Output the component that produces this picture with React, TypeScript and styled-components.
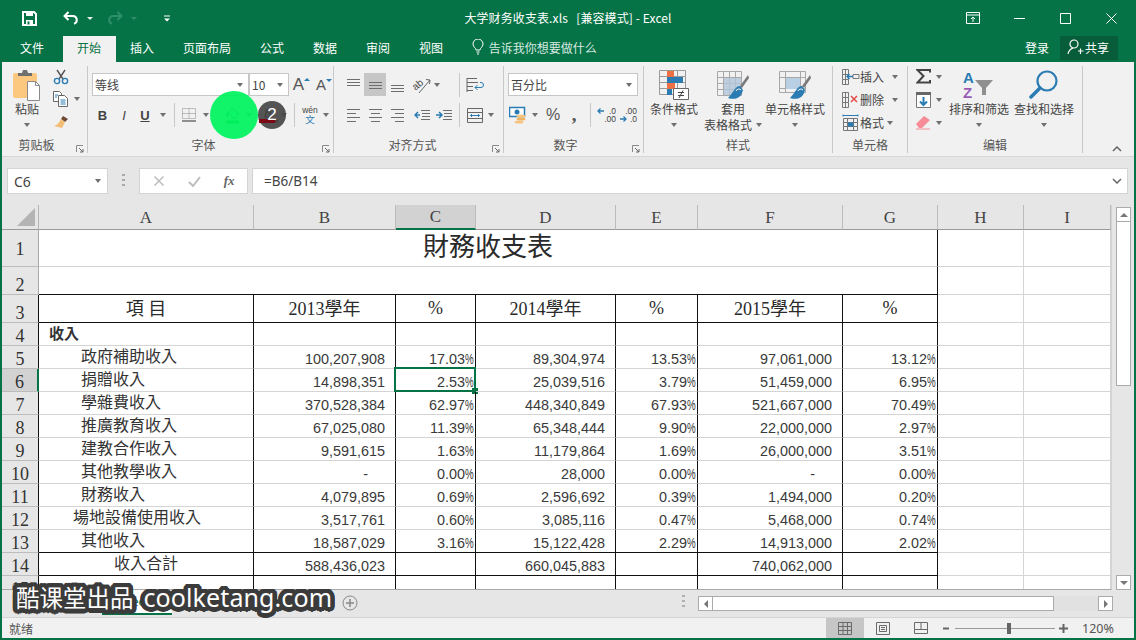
import React from 'react';
import styled, { createGlobalStyle } from 'styled-components';

const UI_FONT = `"Noto Sans CJK SC", "Noto Sans", sans-serif`;
const GREEN = '#067346';

const Global = createGlobalStyle`
  * { box-sizing: border-box; }
  html, body { margin: 0; padding: 0; background: #f1f1f1; overflow: hidden; }
  body { font-family: ${UI_FONT}; }
`;

const Window = styled.div`
  position: relative; width: 1136px; height: 640px; overflow: hidden;
  display: flex; flex-direction: column; background: #f1f1f1;
  border-left: 2px solid ${GREEN}; border-right: 2px solid ${GREEN}; border-bottom: 2px solid ${GREEN};
  color: #444; font-size: 12px;
`;

/* ---------- title bar ---------- */
const TitleBar = styled.div`
  height: 36px; background: ${GREEN}; color: #fff; flex: none;
  display: grid; grid-template-columns: 1fr auto 1fr; align-items: center;
`;
const Qat = styled.div`display: flex; align-items: center; padding-left: 20px;`;
const QatSlot = styled.div<{ $w: number }>`
  width: ${p => p.$w}px; display: flex; align-items: center; justify-content: center;
`;
const DocTitle = styled.div`font-size: 12px; white-space: pre; padding: 0 0 2px 0; letter-spacing: 0.1px;`;
const WinControls = styled.div`display: flex; justify-content: flex-end;`;
const WinBtn = styled.div`
  width: 46px; height: 36px; display: flex; align-items: center; justify-content: center;
`;
const QatCaret = styled.span<{ $dim?: boolean }>`
  width: 0; height: 0; border-left: 3px solid transparent; border-right: 3px solid transparent;
  border-top: 3px solid ${p => (p.$dim ? '#2f8f68' : '#e6f1ec')};
`;

/* ---------- tabs ---------- */
const TabBar = styled.div`
  height: 26px; background: ${GREEN}; flex: none; display: flex; align-items: stretch;
  padding-left: 3.5px; color: #fff;
`;
const Tab = styled.div<{ $active?: boolean; $gap?: number }>`
  padding: 0 14.5px 4px; display: flex; align-items: center; font-size: 12px;
  margin-right: ${p => p.$gap ?? 0}px;
  background: ${p => (p.$active ? '#f1f1f1' : 'transparent')};
  color: ${p => (p.$active ? GREEN : '#fff')};
`;
const TellMe = styled.div`
  display: flex; align-items: center; gap: 5px; margin-left: 14px; padding-bottom: 4px; color: #d7e9e1; font-size: 12px;
`;
const Account = styled.div`
  margin-left: auto; display: flex; align-items: stretch; padding-right: 16px; padding-bottom: 2px;
`;
const SignIn = styled.div`display: flex; align-items: center; margin-right: 11px; padding-bottom: 2px;`;
const Share = styled.div`
  width: 58px; background: #075c39; display: flex; align-items: center; gap: 1px; padding: 0 0 2px 7px;
`;

/* ---------- ribbon ---------- */
const Ribbon = styled.div`
  height: 95px; flex: none; display: flex; padding-top: 4px; background: #f1f1f1;
  border-bottom: 1px solid #d6d6d6;
`;
const Group = styled.div<{ $w: number }>`
  position: relative; width: ${p => p.$w}px; height: 87px; flex: none;
  display: flex; flex-direction: column; border-right: 1px solid #c8c8c8;
`;
const GroupBody = styled.div<{ $pl?: number }>`
  height: 70px; flex: none; padding-left: ${p => p.$pl ?? 0}px; display: flex;
`;
const GroupLabel = styled.div<{ $pr?: number }>`
  height: 17px; line-height: 18px; text-align: center; font-size: 12px; color: #555;
  padding-right: ${p => p.$pr ?? 0}px;
`;
const Launcher = styled.svg`position: absolute; right: 3px; bottom: 0;`;
const Stack = styled.div<{ $mt?: number }>`display: flex; flex-direction: column; margin-top: ${p => p.$mt ?? 0}px;`;
const Row = styled.div<{ $mt?: number; $h?: number }>`
  display: flex; align-items: center; margin-top: ${p => p.$mt ?? 0}px; height: ${p => p.$h ?? 23}px;
`;
const Slot = styled.div<{ $w: number; $ml?: number; $on?: boolean }>`
  width: ${p => p.$w}px; margin-left: ${p => p.$ml ?? 0}px; height: 100%; flex: none;
  display: flex; align-items: center; justify-content: center;
  background: ${p => (p.$on ? '#c6c6c6' : 'transparent')};
`;
const Caret = styled.span`
  width: 0; height: 0; display: inline-block; border-left: 3px solid transparent;
  border-right: 3px solid transparent; border-top: 4px solid #707070;
`;
const VSep = styled.span`width: 1px; height: 24px; background: #c8c8c8;`;
const Select = styled.div<{ $w: number }>`
  width: ${p => p.$w}px; height: 23px; flex: none;
  background: #fff; border: 1px solid #c6c6c6; display: flex; align-items: center;
  justify-content: space-between; padding: 0 5px 0 2px; font-size: 12px; color: #444;
`;
const PasteCol = styled.div`
  width: 40px; margin-left: 5px; display: flex; flex-direction: column; align-items: center; padding-top: 3px;
`;
const ClipCol = styled.div`width: 36px; padding-left: 2px; display: flex; flex-direction: column;`;
const BigBtn = styled.div<{ $w: number; $ml?: number }>`
  width: ${p => p.$w}px; margin-left: ${p => p.$ml ?? 0}px; flex: none;
  display: flex; flex-direction: column; align-items: center; padding-top: 3px;
`;
const BigIcon = styled.div`height: 32px; display: flex; align-items: center; justify-content: center;`;
const BigText = styled.div`
  height: 16px; line-height: 16px; font-size: 12px; white-space: nowrap; color: #444;
  display: flex; align-items: center; gap: 4px;
`;
const CellText = styled.span<{ $w: number }>`width: ${p => p.$w}px; flex: none; font-size: 12px;`;
const RibbonRest = styled.div`
  flex: 1; display: flex; align-items: flex-end; justify-content: flex-end; padding: 0 12px 4px 0;
`;
const StyleGlyph = styled.span<{ $i?: boolean; $u?: boolean }>`
  font-family: "Liberation Sans", sans-serif; font-size: 13px; color: #444; font-weight: ${p => (p.$i ? 400 : 700)};
  font-style: ${p => (p.$i ? 'italic' : 'normal')}; text-decoration: ${p => (p.$u ? 'underline' : 'none')};
`;
const GrowA = styled.span<{ $small?: boolean }>`
  position: relative; font-family: "Liberation Sans", sans-serif; color: #555; font-size: ${p => (p.$small ? 15 : 17)}px;
  margin-left: -4px;
`;
const GrowMark = styled.span<{ $down?: boolean }>`
  position: absolute; right: -6px; top: 3px; width: 0; height: 0;
  border-left: 3px solid transparent; border-right: 3px solid transparent;
  ${p => (p.$down ? `border-top: 3px solid #2b7cb3;` : `border-bottom: 3px solid #2b7cb3;`)}
`;
const PercentGlyph = styled.span`
  font-family: "Liberation Sans", sans-serif; color: #555; font-size: 16px;
`;
const CommaGlyph = styled.span`
  font-family: "Liberation Serif", serif; color: #555; font-size: 19px; font-weight: 700; line-height: 14px;
`;

/* ---------- formula bar ---------- */
const FormulaRow = styled.div`
  height: 48px; flex: none; background: #e6e6e6; display: flex; padding: 11px 6px 11px 5px;
`;
const NameBox = styled.div`
  width: 101px; height: 26px; background: #fff; border: 1px solid #d4d4d4; display: flex; align-items: center;
  justify-content: space-between; padding: 0 6px; font-size: 14px; color: #444; font-family: "Noto Sans", sans-serif;
`;
const Dots = styled.div`width: 31px; display: flex; align-items: center; justify-content: center;`;
const FxBox = styled.div`
  width: 109px; height: 26px; background: #fff; border: 1px solid #d4d4d4; margin-right: 4px;
  display: flex; align-items: center;
`;
const FxSlot = styled.div<{ $w: number }>`
  width: ${p => p.$w}px; display: flex; justify-content: center; align-items: center;
`;
const FxText = styled.span`
  font-family: "Liberation Serif", serif; font-style: italic; font-weight: 700; font-size: 13px; color: #666;
`;
const FormulaInput = styled.div`
  flex: 1; height: 26px; background: #fff; border: 1px solid #d4d4d4; display: flex; align-items: center;
  justify-content: space-between; padding: 0 5px 0 11px; font-size: 13.5px; color: #444; font-family: "Noto Sans", sans-serif;
`;

/* ---------- sheet ---------- */
const SheetArea = styled.div`
  height: 385px; flex: none; display: flex; background: #e6e6e6; overflow: hidden;
`;
const GridWrap = styled.div`
  width: 1110px; height: 385px; overflow: hidden; flex: none; border-bottom: 1px solid #a8a8a8;
  background: #fff; border-right: 1px solid #d4d4d4;
`;
const Grid = styled.div`
  display: grid;
  grid-template-columns: 37px 215px 142px 80px 140px 82px 145px 95px 86px 87px;
  grid-template-rows: 25px 37px 28px 28px repeat(12, 23px);
`;
const Corner = styled.div`
  background: #e6e6e6; border-right: 1px solid #b5b5b5; border-bottom: 1px solid #9a9a9a;
  display: flex; align-items: center; justify-content: flex-end; padding: 0 3px 0 0;
`;
const ColHead = styled.div<{ $on?: boolean }>`
  background: ${p => (p.$on ? '#d2d2d2' : '#e6e6e6')};
  border-right: 1px solid #bcbcbc;
  border-bottom: ${p => (p.$on ? `2px solid ${GREEN}` : '1px solid #9a9a9a')};
  display: flex; align-items: center; justify-content: center; padding-top: 1px;
  font-family: "Liberation Serif", serif; font-size: 17px; color: #444;
`;
const RowHead = styled.div<{ $on?: boolean; $dark?: boolean; $lift?: number }>`
  background: ${p => (p.$on ? '#d2d2d2' : '#e6e6e6')};
  border-right: ${p => (p.$on ? `2px solid ${GREEN}` : p.$dark ? '1px solid #111' : '1px solid #a8a8a8')};
  border-bottom: 1px solid #bcbcbc;
  display: flex; align-items: flex-end; justify-content: center; line-height: 18px;
  padding-bottom: ${p => p.$lift ?? 0}px;
  font-family: "Liberation Serif", serif; font-size: 18px; color: #333;
`;
const Cell = styled.div<{ $right?: boolean; $bottom?: boolean; $span?: number }>`
  position: relative; min-width: 0; white-space: nowrap;
  grid-column: span ${p => p.$span ?? 1};
  border-right: 1px solid ${p => (p.$right ? '#111' : '#d4d4d4')};
  border-bottom: 1px solid ${p => (p.$bottom ? '#111' : '#d4d4d4')};
`;
const TitleCell = styled(Cell)`
  display: flex; align-items: center; justify-content: center; padding-bottom: 8px;
  font-family: "Liberation Serif", "Noto Sans CJK TC", serif; font-size: 26px; color: #2a2a2a;
`;
const HeadCell = styled(Cell)<{ $low?: boolean }>`
  display: flex; align-items: center; justify-content: center; padding-bottom: ${p => (p.$low ? 0 : 3)}px;
  font-family: "Liberation Serif", "Noto Sans CJK TC", serif; font-size: 18px; color: #2a2a2a;
`;
const LabelCell = styled(Cell)<{ $indent: number; $strong?: boolean }>`
  padding-left: ${p => p.$indent}px; display: flex; align-items: center; padding-bottom: 4px;
  font-family: "Noto Sans CJK TC", serif; font-size: ${p => (p.$strong ? 15 : 16)}px; color: #333;
  font-weight: ${p => (p.$strong ? 700 : 400)};
`;
const NumCell = styled(Cell)<{ $pad: number }>`
  padding-right: ${p => p.$pad}px; display: flex; align-items: flex-end; justify-content: flex-end;
  font-family: "Liberation Sans", sans-serif; font-size: 14.4px; line-height: 18px; color: #3a3a3a;
`;
const PctSign = styled.span`
  display: inline-block; width: 9px; transform: scaleX(0.68); transform-origin: left center;
`;
const Selection = styled.div`
  position: absolute; left: -2px; top: -2px; right: -1px; bottom: -1px; border: 2px solid ${GREEN}; pointer-events: none;
  &::after {
    content: ''; position: absolute; right: -4px; bottom: -4px; width: 6px; height: 6px;
    background: ${GREEN};
  }
`;
const VScroll = styled.div`
  width: 15px; margin-left: 4px; padding-top: 2px; display: flex; flex-direction: column; height: 385px;
`;
const ArrowBox = styled.div`
  width: 15px; height: 15px; flex: none; background: #fff; border: 1px solid #ababab;
  display: flex; align-items: center; justify-content: center;
`;
const VThumb = styled.div`height: 164px; flex: none; background: #fff; border: 1px solid #ababab; border-top: 0;`;
const VTrack = styled.div`flex: 1;`;

/* ---------- sheet tabs ---------- */
const SheetTabs = styled.div`
  height: 27px; flex: none; background: #e6e6e6; display: flex; align-items: flex-start; padding-left: 100px;
`;
const SheetTab = styled.div<{ $active?: boolean }>`
  width: 70px; height: 25px; display: flex; align-items: center; justify-content: center;
  font-family: "Noto Sans", sans-serif; font-size: 12px; color: ${p => (p.$active ? GREEN : '#444')};
  background: ${p => (p.$active ? '#fff' : 'transparent')};
  border-bottom: ${p => (p.$active ? `2px solid ${GREEN}` : '0')};
`;
const AddSheet = styled.div`margin-left: 30px; margin-top: 5px; display: flex;`;
const Splitter = styled.div`margin-left: 324px; margin-top: 5px; width: 10px; display: flex;`;
const HScroll = styled.div`
  margin-left: 6px; margin-top: 6px; width: 415px; height: 15px; display: flex; background: #e1e1e1;
`;
const HThumb = styled.div`width: 341px; background: #fff; border: 1px solid #ababab; border-left: 0;`;
const HTrack = styled.div`flex: 1;`;

/* ---------- status bar ---------- */
const StatusBar = styled.div`
  height: 21px; flex: none; background: #f1f1f1; display: flex; align-items: stretch; padding: 0 19px 0 7px;
  border-top: 1px solid #d4d4d4; font-size: 12px; color: #555;
`;
const StatusText = styled.div`display: flex; align-items: center;`;
const ViewBtns = styled.div`margin-left: auto; display: flex; align-items: stretch;`;
const ViewBtn = styled.div<{ $on?: boolean }>`
  width: 38px; display: flex; align-items: center; justify-content: center;
  background: ${p => (p.$on ? '#c6c6c6' : 'transparent')};
`;
const Zoomer = styled.div`display: flex; align-items: center; margin-left: 2px;`;
const ZoomTrack = styled.div`
  position: relative; width: 100px; height: 1px; background: #999; margin: 0 4px;
`;
const ZoomThumb = styled.span`
  position: absolute; left: 52px; top: -5px; width: 4px; height: 11px; background: #666;
`;
const ZoomPct = styled.div`width: 33px; margin-left: 14px; font-family: "Noto Sans", sans-serif; font-size: 12.5px; white-space: nowrap;`;

/* ---------- overlays ---------- */
const GreenSpot = styled.div`
  position: absolute; left: 208px; top: 91px; width: 48px; height: 48px; border-radius: 50%;
  background: rgba(0, 244, 96, 0.93);
`;
const DarkSpot = styled.div`
  position: absolute; left: 256px; top: 101px; width: 28px; height: 28px; border-radius: 50%;
  background: rgba(70, 70, 70, 0.92); color: #fff; display: flex; align-items: center; justify-content: center;
  font-family: "Liberation Sans", sans-serif; font-size: 17px;
`;
const DarkSpotBar = styled.span`
  position: absolute; left: 1px; top: 18px; width: 16px; height: 4px; background: #7b0a14;
`;
const DarkSpotDigit = styled.span`position: relative;`;
const ringShadow = (() => {
  const parts: string[] = [];
  for (let i = 0; i < 32; i++) {
    const a = (i / 32) * Math.PI * 2;
    parts.push(`${(Math.cos(a) * 4.5).toFixed(1)}px ${(Math.sin(a) * 4.5).toFixed(1)}px 0 #3b3b3b`);
    parts.push(`${(Math.cos(a) * 2.5).toFixed(1)}px ${(Math.sin(a) * 2.5).toFixed(1)}px 0 #3b3b3b`);
  }
  return parts.join(',');
})();
const Watermark = styled.div`
  position: absolute; left: 14px; top: 580px; display: flex; gap: 10px; color: #fff; white-space: nowrap;
  font-family: "Noto Sans CJK SC", "Noto Sans", sans-serif; font-size: 23.5px; line-height: 34px;
  text-shadow: ${ringShadow};
`;
const WmLatin = styled.span`font-family: "Noto Sans", sans-serif; font-size: 25px; letter-spacing: 0.1px;`;

/* ---------- icons ---------- */
const Svg: React.FC<{ w: number; h: number; children: React.ReactNode }> = ({ w, h, children }) => (
  <svg width={w} height={h} viewBox={`0 0 ${w} ${h}`} fill="none">{children}</svg>
);
const BLUE = '#2b7cb3';

const SaveIcon = () => (
  <Svg w={15} h={15}>
    <path d="M1 1h11l2 2v11H1z" stroke="#fff" strokeWidth="2" />
    <path d="M4 1h7v4H4zM4 9h7v5H4z" fill="#fff" />
    <path d="M5.500 10.500h2v3h-2z" fill={GREEN} />
  </Svg>
);
const UndoIcon = ({ color = '#fff', flip = false }: { color?: string; flip?: boolean }) => (
  <Svg w={16} h={14}>
    <g transform={flip ? 'translate(16 0) scale(-1 1)' : undefined} stroke={color} strokeWidth="2">
      <path d="M5.500 1 1.500 5l4 4" />
      <path d="M2 5h8a4 4 0 0 1 1 7.800" />
    </g>
  </Svg>
);
const QatMore = () => (
  <Svg w={8} h={7}>
    <path d="M1 1h6" stroke="#fff" />
    <path d="M1 3.500h6L4 6.500z" fill="#fff" />
  </Svg>
);
const RibbonOpt = () => (
  <Svg w={14} h={12}>
    <path d="M.5.5h13v11H.5zM.5 3h13" stroke="#fff" />
    <path d="M7 10V5M5 7l2-2 2 2" stroke="#fff" />
  </Svg>
);
const MinIcon = () => <Svg w={11} h={11}><path d="M0 5.500h11" stroke="#fff" /></Svg>;
const MaxIcon = () => <Svg w={11} h={11}><path d="M.5.5h10v10H.5z" stroke="#fff" /></Svg>;
const CloseIcon = () => <Svg w={11} h={11}><path d="M.5.5l10 10M10.500.5l-10 10" stroke="#fff" /></Svg>;
const BulbIcon = () => (
  <Svg w={12} h={16}>
    <path d="M4 11c0-2-3-3-3-6a5 5 0 0 1 10 0c0 3-3 4-3 6z" stroke="#fff" />
    <path d="M4.500 13h3M5 15h2" stroke="#fff" />
  </Svg>
);
const UserIcon = () => (
  <Svg w={17} h={16}>
    <circle cx="7" cy="5" r="4" stroke="#fff" strokeWidth="1.200" />
    <path d="M1 15c.5-3 2.500-5 5-6M11 12h5.500M13.500 9.500v5.500" stroke="#fff" strokeWidth="1.200" />
  </Svg>
);
const PasteIcon = () => (
  <Svg w={30} h={32}>
    <rect x="1" y="4" width="24" height="25" rx="2" fill="#fcc77e" />
    <path d="M6 4h4l1-3h4l1 3h4v3H6z" fill="#6f6f6f" />
    <path d="M15.500 12.500h8l4 4v15h-12z" fill="#fff" stroke="#8a8a8a" />
    <path d="M23.500 12.500v4h4" stroke="#8a8a8a" />
  </Svg>
);
const ScissorsIcon = () => (
  <Svg w={16} h={16}>
    <path d="M4 1l6 9M12 1l-6 9" stroke="#555" strokeWidth="1.400" />
    <circle cx="4" cy="12" r="2.600" stroke={BLUE} strokeWidth="1.400" />
    <circle cx="12" cy="12" r="2.600" stroke={BLUE} strokeWidth="1.400" />
  </Svg>
);
const CopyIcon = () => (
  <Svg w={16} h={16}>
    <path d="M.5.5h6l2 2v8H.5z" fill="#fff" stroke="#666" />
    <path d="M5.500 4.500h6l3 3v8h-9z" fill="#fff" stroke="#666" />
    <path d="M7.500 9h5M7.500 11h5M7.500 13h5M2 4h3M2 6h2" stroke={BLUE} />
  </Svg>
);
const BrushIcon = () => (
  <Svg w={16} h={14}>
    <path d="M10 1l5 3-3 3-4-3z" fill="#6b4a38" />
    <path d="M8 4l4 3-3 6-8-2c3-1 5-3 7-7z" fill="#f4bd76" />
  </Svg>
);
const Launch = () => (
  <Launcher width="8" height="8" viewBox="0 0 8 8" fill="none">
    <path d="M.5 7V.5H7" stroke="#8a8a8a" />
    <path d="M3 3l4 4M7 4v3H4" stroke="#666" />
  </Launcher>
);
const BordersIcon = () => (
  <Svg w={14} h={14}>
    <path d="M.5.5h13v10H.5zM.5 5.500h13M7 .5v10" stroke="#8a8a8a" strokeDasharray="1 1" />
    <path d="M0 13h14" stroke="#666" strokeWidth="1.400" />
  </Svg>
);
const BucketIcon = () => (
  <Svg w={18} h={18}>
    <path d="M8 2l7 6-5 5-6-6z" fill="#bfe9cf" stroke="#1d5a36" />
    <path d="M4 7 3 11" stroke="#1d5a36" strokeWidth="1.500" />
    <path d="M2 16h13" stroke="#00a020" strokeWidth="3" />
  </Svg>
);
const FontColorIcon = () => (
  <Svg w={18} h={18}>
    <text x="3" y="12" fontFamily="Liberation Sans" fontSize="12" fontWeight="700" fontStyle="italic" fill="#222">b</text>
    <path d="M0 15h17" stroke="#a00000" strokeWidth="3" />
  </Svg>
);
const WenIcon = () => (
  <Svg w={20} h={20}>
    <text x="10" y="8" textAnchor="middle" fontFamily="Liberation Sans" fontSize="8.500" fill="#444">wén</text>
    <text x="10" y="18" textAnchor="middle" fontFamily="Noto Sans CJK SC" fontSize="9.500" fill={BLUE}>文</text>
  </Svg>
);
const Lines = ({ kind }: { kind: 'top' | 'mid' | 'bot' | 'left' | 'center' | 'right' }) => {
  const y = kind === 'top' ? [2, 5, 8] : kind === 'mid' ? [5, 8, 11] : kind === 'bot' ? [8, 11, 14] : [2, 6, 10, 14];
  return (
    <Svg w={15} h={16}>
      {y.map((v, i) => {
        const short = i % 2 === 1 && y.length === 4;
        const [a, b] = !short ? [1, 14] : kind === 'left' ? [1, 10] : kind === 'right' ? [5, 14] : [3, 12];
        return <path key={v} d={`M${a} ${v + 0.5}H${b}`} stroke="#6e6e6e" />;
      })}
    </Svg>
  );
};
const OrientIcon = () => (
  <Svg w={20} h={18}>
    <text x="1" y="12" transform="rotate(-40 6 10)" fontFamily="Liberation Sans" fontSize="10" fill="#444">ab</text>
    <path d="M7 17 18 4M14 3.500l4 .5-.5 4" stroke="#666" />
  </Svg>
);
const WrapIcon = () => (
  <Svg w={18} h={16}>
    <path d="M1 1.500h10M1 5.500h11M1 9.500h6M1 13.500h6" stroke="#666" />
    <path d="M1 1v14" stroke="#666" />
    <path d="M9 10.500h6a2.500 2.500 0 0 0 0-5h-1M11.500 8l-2.500 2.500 2.500 2.500" stroke={BLUE} />
  </Svg>
);
const IndentIcon = ({ inc }: { inc?: boolean }) => (
  <Svg w={16} h={12}>
    <path d="M7 1.500h9M8 4.500h8M8 7.500h8M7 10.500h9" stroke="#6e6e6e" />
    <path d={inc ? 'M0 6h5M3 3l3 3-3 3' : 'M1 6h5M4 3 1 6l3 3'} stroke={BLUE} strokeWidth="1.500" />
  </Svg>
);
const MergeIcon = () => (
  <Svg w={16} h={15}>
    <path d="M.5.5h15v14H.5zM.5 4.500h15M.5 10.500h15" stroke="#666" />
    <path d="M3.500 7.500h9M5 6 3.500 7.500 5 9M11 6l1.500 1.500L11 9" stroke={BLUE} />
  </Svg>
);
const CurrencyIcon = () => (
  <Svg w={18} h={18}>
    <path d="M.5 1.500h15v9H.5z" fill="#fff" stroke={BLUE} strokeWidth="1.500" />
    <circle cx="8" cy="6" r="2.500" fill={BLUE} />
    <ellipse cx="12" cy="10" rx="4.500" ry="1.600" fill="#f6c37e" />
    <ellipse cx="12" cy="13" rx="4.500" ry="1.600" fill="#f3b461" />
    <ellipse cx="10" cy="16" rx="4.500" ry="1.600" fill="#f6c37e" />
  </Svg>
);
const DecIcon = ({ inc }: { inc?: boolean }) => (
  <Svg w={20} h={16}>
    <text x="20" y="7" textAnchor="end" fontFamily="Liberation Sans" fontSize="8.500" fill="#444">{inc ? '.0' : '.00'}</text>
    <text x="20" y="15" textAnchor="end" fontFamily="Liberation Sans" fontSize="8.500" fill="#444">{inc ? '.00' : '.0'}</text>
    {inc ? <path d="M8 4H2M4.500 1.500 2 4l2.500 2.500" stroke={BLUE} strokeWidth="1.300" /> : <path d="M3 12h6M6.500 9.500 9 12l-2.500 2.500" stroke={BLUE} strokeWidth="1.300" />}
  </Svg>
);
const CondIcon = () => (
  <Svg w={30} h={32}>
    <path d="M.5 1.500h26v24H.5zM.5 7.500h26M.5 13.500h26M.5 19.500h26M8.500 1.500v24M18.500 1.500v24" stroke="#9a9a9a" />
    <path d="M8 2h7v6H8zM8 14h8v6H8z" fill="#ef6f45" />
    <path d="M8 8h16v6H8zM8 20h5v6H8z" fill={BLUE} />
    <path d="M14.500 19.500h15v11h-15z" fill="#fff" stroke="#666" />
    <path d="M19 23.500h6M19 26.500h6M24 21.500l-4 7.500" stroke="#444" />
  </Svg>
);
const TableFmtIcon = () => (
  <Svg w={32} h={32}>
    <path d="M.5 2.500h24v24H.5zM.5 8.500h24M.5 14.500h24M.5 20.500h24M6.500 2.500v24M12.500 2.500v24M18.500 2.500v24" stroke="#a8a8a8" />
    <path d="M7 9h17v17H7z" fill="#b3c5d9" opacity=".8" />
    <path d="M31 6 23 17l2 2 7-10z" fill="#7a7a7a" />
    <path d="M23 17c-5 0-6 6-12 12 6 2 13 1 15-8z" fill={BLUE} />
    <path d="M19 22a3 3 0 0 1 5-1" stroke="#fff" />
  </Svg>
);
const CellStyleIcon = () => (
  <Svg w={32} h={32}>
    <path d="M.5 2.500h26v21H.5zM.5 8.500h26M.5 19.500h26M6.500 2.500v21M21.500 2.500v21" stroke="#a8a8a8" />
    <path d="M7 9h14v11H7z" fill="#b8cfe4" />
    <path d="M31 6 23 17l2 2 7-10z" fill="#7a7a7a" />
    <path d="M23 17c-5 0-6 6-12 12 6 2 13 1 15-8z" fill={BLUE} />
    <path d="M19 22a3 3 0 0 1 5-1" stroke="#fff" />
  </Svg>
);
const InsertIcon = () => (
  <Svg w={19} h={16}>
    <path d="M1.500.5h6v5h-6zM1.500 5.500v5h6v-5M1.500 10.500v5h6v-5M4.500.5v15" stroke="#777" />
    <path d="M12 5.500h6v4h-6z" stroke="#777" />
    <path d="M6 7.500h6M8.500 5 6 7.500 8.500 10" stroke={BLUE} strokeWidth="1.400" />
  </Svg>
);
const DeleteIcon = () => (
  <Svg w={19} h={16}>
    <path d="M1.500.5h6v5h-6zM1.500 5.500v5h6v-5M1.500 10.500v5h6v-5M4.500.5v15" stroke="#777" />
    <path d="M10 4l6 6M16 4l-6 6" stroke="#e2504c" strokeWidth="1.600" />
  </Svg>
);
const FormatIcon = () => (
  <Svg w={17} h={17}>
    <path d="M1.500 4.500h14v12h-14zM1.500 8.500h14M1.500 12.500h14M5.500 4.500v12M11.500 4.500v12" stroke="#777" />
    <path d="M6 8.500h5.500v4H6z" fill={BLUE} />
    <path d="M1 1.500h15M1 .5v2M16 .5v2" stroke={BLUE} />
  </Svg>
);
const SigmaIcon = () => (
  <Svg w={15} h={15}>
    <path d="M14 3.500V1H1.500l6 6-6 6.500H14V11" stroke="#444" strokeWidth="2" />
  </Svg>
);
const FillDownIcon = () => (
  <Svg w={15} h={16}>
    <path d="M.5 2.500h14v13H.5z" fill="#fff" stroke="#777" />
    <path d="M0 0h15v3H0z" fill="#666" />
    <path d="M7.500 5v8M4 9.500l3.500 3.500L11 9.500" stroke={BLUE} strokeWidth="2" />
  </Svg>
);
const EraserIcon = () => (
  <Svg w={16} h={15}>
    <path d="M1 9l8-8 6 4-8 8H4z" fill="#f58c98" />
    <path d="M1 14h14" stroke="#f58c98" />
  </Svg>
);
const SortIcon = () => (
  <Svg w={32} h={32}>
    <text x="0" y="14" fontFamily="Liberation Sans" fontWeight="700" fontSize="15" fill={BLUE}>A</text>
    <text x="0" y="29" fontFamily="Liberation Sans" fontWeight="700" fontSize="15" fill="#9a5bb5">Z</text>
    <path d="M12 11h18l-7 8v7h-4v-7z" fill="#8f8f8f" />
  </Svg>
);
const SearchIcon = () => (
  <Svg w={30} h={30}>
    <circle cx="18" cy="11" r="9.500" stroke={BLUE} strokeWidth="2.200" />
    <path d="M11 18 2 27" stroke={BLUE} strokeWidth="3.500" strokeLinecap="round" />
  </Svg>
);
const CollapseIcon = () => <Svg w={10} h={6}><path d="M1 5l4-4 4 4" stroke="#666" strokeWidth="1.500" /></Svg>;
const ChevronDown = () => <Svg w={10} h={6}><path d="M1 1l4 4 4-4" stroke="#666" strokeWidth="1.500" /></Svg>;
const DotsIcon = () => (
  <Svg w={3} h={14}><path d="M0 1h3M0 6h3M0 11h3" stroke="#aaa" strokeWidth="2" /></Svg>
);
const CrossIcon = () => <Svg w={12} h={12}><path d="M1.500 1.500l9 9M10.500 1.500l-9 9" stroke="#bdbdbd" strokeWidth="1.500" /></Svg>;
const CheckIcon = () => <Svg w={13} h={11}><path d="M1 6l4 4 7-9" stroke="#bdbdbd" strokeWidth="2" /></Svg>;
const CornerTri = () => <Svg w={18} h={18}><path d="M18 0v18H0z" fill="#b4b4b4" /></Svg>;
const Tri = ({ dir }: { dir: 'up' | 'down' | 'left' | 'right' }) => {
  const d = { up: 'M4 0l4 4H0z', down: 'M0 0h8L4 4z', left: 'M0 4l4-4v8z', right: 'M0 0l4 4-4 4z' }[dir];
  const vertical = dir === 'up' || dir === 'down';
  return <svg width={vertical ? 8 : 4} height={vertical ? 4 : 8} viewBox={vertical ? '0 0 8 4' : '0 0 4 8'}><path d={d} fill="#777" /></svg>;
};
const PlusCircle = () => (
  <Svg w={16} h={16}>
    <circle cx="8" cy="8" r="7" stroke="#888" />
    <path d="M4 8h8M8 4v8" stroke="#888" strokeWidth="1.500" />
  </Svg>
);
const GripIcon = () => <Svg w={3} h={12}><path d="M0 1h3M0 6h3M0 11h3" stroke="#b0b0b0" strokeWidth="2" /></Svg>;
const ViewNormal = () => (
  <Svg w={14} h={13}>
    <path d="M.5.5h13v12H.5zM.5 4.500h13M.5 8.500h13M5 .5v12M9.500 .5v12" stroke="#6a6a6a" />
  </Svg>
);
const ViewPage = () => (
  <Svg w={14} h={13}>
    <path d="M.5.5h13v12H.5z" stroke="#6a6a6a" />
    <path d="M3.500 3.500h7v6h-7zM5 5.500h4M5 7.500h4" stroke="#6a6a6a" />
  </Svg>
);
const ViewBreak = () => (
  <Svg w={14} h={13}>
    <path d="M.5 7.500V.5h13v11H.5zM.5 7.500h13M7 .5v7" stroke="#6a6a6a" />
  </Svg>
);
const MinusMark = () => <Svg w={9} h={3}><path d="M1 1.500h6" stroke="#666" strokeWidth="2" /></Svg>;
const PlusMark = () => <Svg w={9} h={9}><path d="M0 4.500h9M4.500 0v9" stroke="#666" strokeWidth="2" /></Svg>;

/* ---------- data ---------- */
const COLS = ['A', 'B', 'C', 'D', 'E', 'F', 'G', 'H', 'I'];
const PADS = [0, 10, 1, 10, 1, 10, 1];
type Line = { label: string; indent: number; v: string[] };
const LINES: Line[] = [
  { label: '政府補助收入', indent: 42, v: ['100,207,908', '17.03%', '89,304,974', '13.53%', '97,061,000', '13.12%'] },
  { label: '捐贈收入', indent: 42, v: ['14,898,351', '2.53%', '25,039,516', '3.79%', '51,459,000', '6.95%'] },
  { label: '學雜費收入', indent: 42, v: ['370,528,384', '62.97%', '448,340,849', '67.93%', '521,667,000', '70.49%'] },
  { label: '推廣教育收入', indent: 42, v: ['67,025,080', '11.39%', '65,348,444', '9.90%', '22,000,000', '2.97%'] },
  { label: '建教合作收入', indent: 42, v: ['9,591,615', '1.63%', '11,179,864', '1.69%', '26,000,000', '3.51%'] },
  { label: '其他教學收入', indent: 42, v: ['-', '0.00%', '28,000', '0.00%', '-', '0.00%'] },
  { label: '財務收入', indent: 42, v: ['4,079,895', '0.69%', '2,596,692', '0.39%', '1,494,000', '0.20%'] },
  { label: '場地設備使用收入', indent: 34, v: ['3,517,761', '0.60%', '3,085,116', '0.47%', '5,468,000', '0.74%'] },
  { label: '其他收入', indent: 42, v: ['18,587,029', '3.16%', '15,122,428', '2.29%', '14,913,000', '2.02%'] },
];
const HEADS = ['項 目', '2013學年', '%', '2014學年', '%', '2015學年', '%'];

const Num = ({ text }: { text: string }) =>
  text.endsWith('%') ? <>{text.slice(0, -1)}<PctSign>%</PctSign></> : <>{text}</>;

const Spares = () => <><Cell /><Cell /></>;

export default function App() {
  return (
    <Window>
      <Global />
      <TitleBar>
        <Qat>
          <SaveIcon />
          <QatSlot $w={26} />
          <UndoIcon />
          <QatSlot $w={22}><QatCaret /></QatSlot>
          <QatSlot $w={6} />
          <UndoIcon color="#2f8f68" flip />
          <QatSlot $w={22}><QatCaret $dim /></QatSlot>
          <QatSlot $w={18} />
          <QatMore />
        </Qat>
        <DocTitle>{'大学财务收支表.xls   [兼容模式] - Excel'}</DocTitle>
        <WinControls>
          <WinBtn><RibbonOpt /></WinBtn>
          <WinBtn><MinIcon /></WinBtn>
          <WinBtn><MaxIcon /></WinBtn>
          <WinBtn><CloseIcon /></WinBtn>
        </WinControls>
      </TitleBar>

      <TabBar>
        <Tab $gap={4}>文件</Tab>
        <Tab $active>开始</Tab>
        <Tab>插入</Tab>
        <Tab>页面布局</Tab>
        <Tab>公式</Tab>
        <Tab>数据</Tab>
        <Tab>审阅</Tab>
        <Tab>视图</Tab>
        <TellMe><BulbIcon />告诉我你想要做什么</TellMe>
        <Account>
          <SignIn>登录</SignIn>
          <Share><UserIcon />共享</Share>
        </Account>
      </TabBar>

      <Ribbon>
        <Group $w={86}>
          <GroupBody>
            <PasteCol>
              <PasteIcon />
              <BigText>粘贴</BigText>
              <BigText><Caret /></BigText>
            </PasteCol>
            <ClipCol>
              <Row $h={21}><Slot $w={24}><ScissorsIcon /></Slot></Row>
              <Row $h={23}><Slot $w={24}><CopyIcon /></Slot><Slot $w={8}><Caret /></Slot></Row>
              <Row $h={23}><Slot $w={24}><BrushIcon /></Slot></Row>
            </ClipCol>
          </GroupBody>
          <GroupLabel $pr={16}>剪贴板</GroupLabel>
          <Launch />
        </Group>

        <Group $w={246}>
          <GroupBody $pl={4}>
            <Stack>
              <Row $mt={7}>
                <Select $w={157}>等线<Caret /></Select>
                <Select $w={40}>10<Caret /></Select>
                <Slot $w={23}><GrowA>A<GrowMark /></GrowA></Slot>
                <Slot $w={22}><GrowA $small>A<GrowMark $down /></GrowA></Slot>
              </Row>
              <Row $mt={7} $h={24}>
                <Slot $w={21}><StyleGlyph>B</StyleGlyph></Slot>
                <Slot $w={22}><StyleGlyph $i>I</StyleGlyph></Slot>
                <Slot $w={20}><StyleGlyph $u>U</StyleGlyph></Slot>
                <Slot $w={15}><Caret /></Slot>
                <Slot $w={8}><VSep /></Slot>
                <Slot $w={22}><BordersIcon /></Slot>
                <Slot $w={12}><Caret /></Slot>
                <Slot $w={22} $ml={10}><BucketIcon /></Slot>
                <Slot $w={10}><Caret /></Slot>
                <Slot $w={20} $ml={6}><FontColorIcon /></Slot>
                <Slot $w={8}><Caret /></Slot>
                <Slot $w={12}><VSep /></Slot>
                <Slot $w={20}><WenIcon /></Slot>
                <Slot $w={12}><Caret /></Slot>
              </Row>
            </Stack>
          </GroupBody>
          <GroupLabel $pr={14}>字体</GroupLabel>
          <Launch />
        </Group>

        <Group $w={170}>
          <GroupBody $pl={8}>
            <Stack>
              <Row $mt={7}>
                <Slot $w={22}><Lines kind="top" /></Slot>
                <Slot $w={22} $on><Lines kind="mid" /></Slot>
                <Slot $w={22}><Lines kind="bot" /></Slot>
                <Slot $w={22} $ml={3}><OrientIcon /></Slot>
                <Slot $w={8}><Caret /></Slot>
                <Slot $w={8} $ml={14}><VSep /></Slot>
                <Slot $w={24}><WrapIcon /></Slot>
              </Row>
              <Row $mt={7} $h={24}>
                <Slot $w={22}><Lines kind="left" /></Slot>
                <Slot $w={22}><Lines kind="center" /></Slot>
                <Slot $w={22}><Lines kind="right" /></Slot>
                <Slot $w={22} $ml={3}><IndentIcon /></Slot>
                <Slot $w={22}><IndentIcon inc /></Slot>
                <Slot $w={8}><VSep /></Slot>
                <Slot $w={24}><MergeIcon /></Slot>
                <Slot $w={8}><Caret /></Slot>
              </Row>
            </Stack>
          </GroupBody>
          <GroupLabel $pr={12}>对齐方式</GroupLabel>
          <Launch />
        </Group>

        <Group $w={140}>
          <GroupBody $pl={4}>
            <Stack>
              <Row $mt={7}><Select $w={130}>百分比<Caret /></Select></Row>
              <Row $mt={7} $h={24}>
                <Slot $w={20}><CurrencyIcon /></Slot>
                <Slot $w={14}><Caret /></Slot>
                <Slot $w={22}><PercentGlyph>%</PercentGlyph></Slot>
                <Slot $w={20}><CommaGlyph>,</CommaGlyph></Slot>
                <Slot $w={12}><VSep /></Slot>
                <Slot $w={20}><DecIcon inc /></Slot>
                <Slot $w={22}><DecIcon /></Slot>
              </Row>
            </Stack>
          </GroupBody>
          <GroupLabel $pr={16}>数字</GroupLabel>
          <Launch />
        </Group>

        <Group $w={189}>
          <GroupBody>
            <BigBtn $w={60}>
              <BigIcon><CondIcon /></BigIcon>
              <BigText>条件格式</BigText>
              <BigText><Caret /></BigText>
            </BigBtn>
            <BigBtn $w={58}>
              <BigIcon><TableFmtIcon /></BigIcon>
              <BigText>套用</BigText>
              <BigText>表格格式<Caret /></BigText>
            </BigBtn>
            <BigBtn $w={60} $ml={3}>
              <BigIcon><CellStyleIcon /></BigIcon>
              <BigText>单元格样式</BigText>
              <BigText><Caret /></BigText>
            </BigBtn>
          </GroupBody>
          <GroupLabel>样式</GroupLabel>
        </Group>

        <Group $w={75}>
          <GroupBody $pl={7}>
            <Stack $mt={-1}>
              <Row><Slot $w={20}><InsertIcon /></Slot><CellText $w={24}>插入</CellText><Slot $w={22}><Caret /></Slot></Row>
              <Row><Slot $w={20}><DeleteIcon /></Slot><CellText $w={24}>删除</CellText><Slot $w={22}><Caret /></Slot></Row>
              <Row><Slot $w={20}><FormatIcon /></Slot><CellText $w={24}>格式</CellText><Slot $w={12}><Caret /></Slot></Row>
            </Stack>
          </GroupBody>
          <GroupLabel>单元格</GroupLabel>
        </Group>

        <Group $w={175}>
          <GroupBody $pl={5}>
            <Stack $mt={-1}>
              <Row><Slot $w={20}><SigmaIcon /></Slot><Slot $w={12}><Caret /></Slot></Row>
              <Row><Slot $w={20}><FillDownIcon /></Slot><Slot $w={12}><Caret /></Slot></Row>
              <Row><Slot $w={20}><EraserIcon /></Slot><Slot $w={12}><Caret /></Slot></Row>
            </Stack>
            <BigBtn $w={62} $ml={3}>
              <BigIcon><SortIcon /></BigIcon>
              <BigText>排序和筛选</BigText>
              <BigText><Caret /></BigText>
            </BigBtn>
            <BigBtn $w={66} $ml={1}>
              <BigIcon><SearchIcon /></BigIcon>
              <BigText>查找和选择</BigText>
              <BigText><Caret /></BigText>
            </BigBtn>
          </GroupBody>
          <GroupLabel>编辑</GroupLabel>
        </Group>

        <RibbonRest><CollapseIcon /></RibbonRest>
      </Ribbon>

      <FormulaRow>
        <NameBox>C6<Caret /></NameBox>
        <Dots><DotsIcon /></Dots>
        <FxBox>
          <FxSlot $w={38}><CrossIcon /></FxSlot>
          <FxSlot $w={34}><CheckIcon /></FxSlot>
          <FxSlot $w={36}><FxText>fx</FxText></FxSlot>
        </FxBox>
        <FormulaInput>=B6/B14<ChevronDown /></FormulaInput>
      </FormulaRow>

      <SheetArea>
        <GridWrap>
          <Grid>
            <Corner><CornerTri /></Corner>
            {COLS.map(c => <ColHead key={c} $on={c === 'C'}>{c}</ColHead>)}

            <RowHead $lift={8}>1</RowHead>
            <TitleCell $span={7} $right>財務收支表</TitleCell>
            <Spares />

            <RowHead>2</RowHead>
            <Cell $span={7} $right $bottom />
            <Spares />

            <RowHead $dark>3</RowHead>
            {HEADS.map((h, i) => <HeadCell key={i} $right $bottom $low={h === '%'}>{h}</HeadCell>)}
            <Spares />

            <RowHead $dark>4</RowHead>
            <LabelCell $right $indent={10} $strong>收入</LabelCell>
            {PADS.slice(1).map((_, i) => <Cell key={i} $right />)}
            <Spares />

            {LINES.map((line, r) => (
              <React.Fragment key={line.label}>
                <RowHead $dark $on={r === 1}>{r + 5}</RowHead>
                <LabelCell $right $indent={line.indent} $bottom={r === 8}>{line.label}</LabelCell>
                {line.v.map((val, c) => (
                  <NumCell key={c} $right $bottom={r === 8} $pad={val === '-' ? 27 : PADS[c + 1]}>
                    <Num text={val} />
                    {r === 1 && c === 1 && <Selection />}
                  </NumCell>
                ))}
                <Spares />
              </React.Fragment>
            ))}

            <RowHead $dark>14</RowHead>
            <LabelCell $right $bottom $indent={75}>收入合計</LabelCell>
            <NumCell $right $bottom $pad={10}>588,436,023</NumCell>
            <Cell $right $bottom />
            <NumCell $right $bottom $pad={10}>660,045,883</NumCell>
            <Cell $right $bottom />
            <NumCell $right $bottom $pad={10}>740,062,000</NumCell>
            <Cell $right $bottom />
            <Spares />

            <RowHead $dark>15</RowHead>
            {PADS.map((_, i) => <Cell key={i} $right />)}
            <Spares />
          </Grid>
        </GridWrap>
        <VScroll>
          <ArrowBox><Tri dir="up" /></ArrowBox>
          <VThumb />
          <VTrack />
          <ArrowBox><Tri dir="down" /></ArrowBox>
        </VScroll>
      </SheetArea>

      <SheetTabs>
        <SheetTab $active>Sheet1</SheetTab>
        <SheetTab>Sheet2</SheetTab>
        <SheetTab>Sheet3</SheetTab>
        <AddSheet><PlusCircle /></AddSheet>
        <Splitter><GripIcon /></Splitter>
        <HScroll>
          <ArrowBox><Tri dir="left" /></ArrowBox>
          <HThumb />
          <HTrack />
          <ArrowBox><Tri dir="right" /></ArrowBox>
        </HScroll>
      </SheetTabs>

      <StatusBar>
        <StatusText>就绪</StatusText>
        <ViewBtns>
          <ViewBtn $on><ViewNormal /></ViewBtn>
          <ViewBtn><ViewPage /></ViewBtn>
          <ViewBtn><ViewBreak /></ViewBtn>
        </ViewBtns>
        <Zoomer>
          <MinusMark />
          <ZoomTrack><ZoomThumb /></ZoomTrack>
          <PlusMark />
          <ZoomPct>120%</ZoomPct>
        </Zoomer>
      </StatusBar>

      <GreenSpot />
      <DarkSpot><DarkSpotBar /><DarkSpotDigit>2</DarkSpotDigit></DarkSpot>
      <Watermark>
        <span>酷课堂出品</span>
        <WmLatin>coolketang.com</WmLatin>
      </Watermark>
    </Window>
  );
}
